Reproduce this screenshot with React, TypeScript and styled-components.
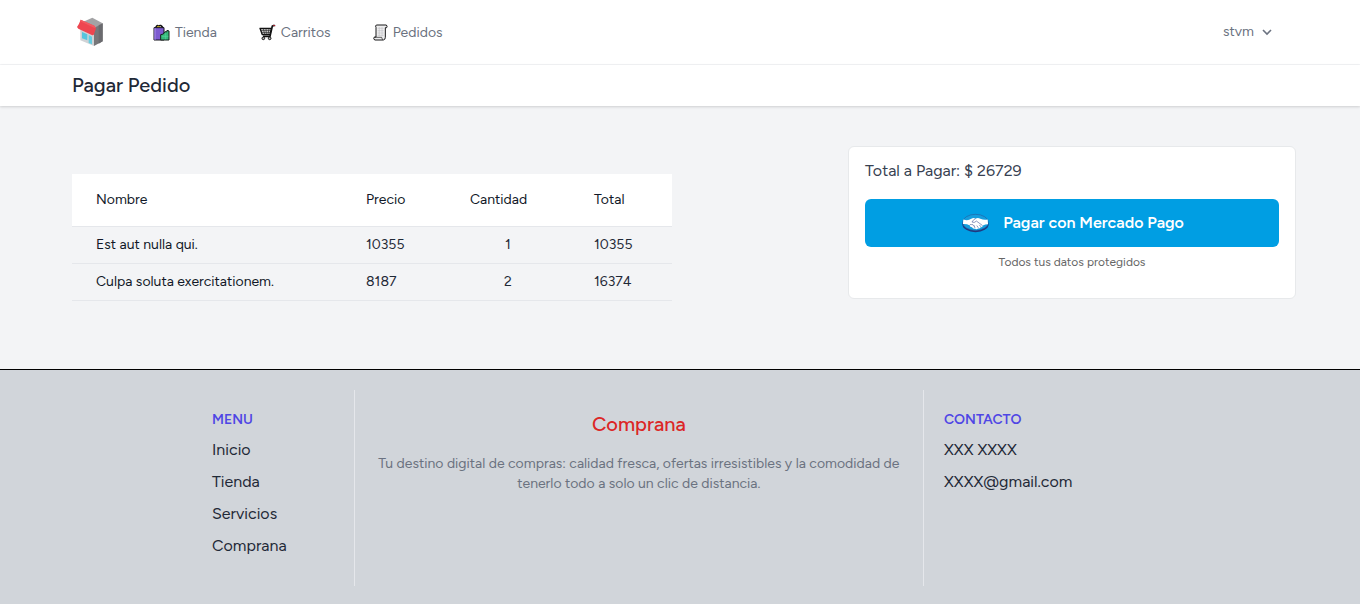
import React from 'react';
import styled, { createGlobalStyle } from 'styled-components';

const GlobalStyle = createGlobalStyle`
  *, *::before, *::after { box-sizing: border-box; }
  body {
    margin: 0;
    font-family: Figtree, Roboto, sans-serif;
    font-size: 14px;
    line-height: 20px;
    color: #111827;
    background: #f3f4f6;
  }
  h1, h2, h3, p, ul { margin: 0; padding: 0; }
  ul { list-style: none; }
  a { color: inherit; text-decoration: none; }
  button { font: inherit; cursor: pointer; }
  svg { display: block; flex: none; }
`;

const Page = styled.div`
  display: flex;
  flex-direction: column;
  min-height: 100vh;
`;

const NavBar = styled.nav`
  background: #fff;
  border-bottom: 1px solid #f3f4f6;
`;

const Container = styled.div`
  max-width: 1280px;
  margin: 0 auto;
  padding: 0 32px;
`;

const NavInner = styled(Container)`
  display: flex;
  align-items: center;
  height: 64px;
`;

const LogoLink = styled.a`
  margin: 0 49px 0 4px;
`;

const NavLinks = styled.ul`
  display: flex;
  gap: 42px;
  flex: 1;
  padding-top: 2px;
`;

const NavLink = styled.a`
  display: flex;
  align-items: center;
  gap: 5px;
  color: #6b7280;
`;

const UserButton = styled.button`
  display: flex;
  align-items: center;
  gap: 7px;
  margin-right: 15px;
  padding: 0;
  border: 0;
  background: none;
  color: #6b7280;
`;

const PageHeader = styled.header`
  background: #fff;
  box-shadow: 0 1px 3px rgba(0, 0, 0, 0.1), 0 1px 2px rgba(0, 0, 0, 0.06);
`;

const PageTitle = styled.h1`
  padding: 8px 0;
  font-size: 20px;
  font-weight: 500;
  line-height: 25px;
  color: #1f2937;
`;

const Content = styled.main`
  display: flex;
  justify-content: space-between;
  align-items: flex-start;
  gap: 32px;
  width: 100%;
  max-width: 1280px;
  margin: 0 auto;
  padding: 40px 24px 40px 32px;
`;

const OrderTable = styled.table`
  flex: 0 1 600px;
  width: 600px;
  margin: 28px 0;
  border-collapse: separate;
  border-spacing: 0;
  table-layout: fixed;
`;

const Col = styled.col<{ $width?: number }>`
  width: ${({ $width }) => ($width ? `${$width}px` : 'auto')};
`;

const HeadCell = styled.th`
  padding: 16px 24px;
  background: #fff;
  border-bottom: 1px solid #e5e7eb;
  font-weight: 400;
  text-align: left;
`;

const Cell = styled.td<{ $center?: boolean; $strong?: boolean }>`
  padding: 8px 24px;
  border-bottom: 1px solid #e5e7eb;
  text-align: ${({ $center }) => ($center ? 'center' : 'left')};
  color: ${({ $strong }) => ($strong ? '#111827' : '#1f2937')};
`;

const PayCard = styled.section`
  flex: 0 1 448px;
  padding: 12px 16px 28px;
  background: #fff;
  border: 1px solid #e7e9eb;
  border-radius: 6px;
`;

const PayTotal = styled.p`
  margin-bottom: 16px;
  font-size: 16px;
  line-height: 24px;
  color: #374151;
`;

const PayButton = styled.button`
  display: flex;
  align-items: center;
  justify-content: center;
  gap: 14px;
  width: 100%;
  height: 48px;
  padding: 0 0 0 2px;
  border: 0;
  border-radius: 6px;
  background: #009ee3;
  color: #fff;
  font-size: 16px;
  font-weight: 600;
`;

const PayNote = styled.p`
  margin-top: 8px;
  font-size: 12px;
  line-height: 15px;
  text-align: center;
  color: #666;
`;

const Footer = styled.footer`
  flex: 1;
  padding: 20px 24px;
  background: #d1d5da;
  border-top: 1px solid #000;
`;

const FooterGrid = styled.div`
  display: grid;
  grid-template-columns: 2fr 7fr 3fr;
  max-width: 976px;
  margin: 0 auto;
`;

const FooterColumn = styled.section<{ $divided?: boolean }>`
  min-height: 196px;
  padding: 20px;
  border-right: ${({ $divided }) => ($divided ? '1px solid #e5e7eb' : '0')};
`;

const FooterHeading = styled.h3`
  margin-bottom: 8px;
  font-size: 14px;
  font-weight: 600;
  line-height: 20px;
  color: #4f46e5;
`;

const FooterList = styled.ul`
  display: flex;
  flex-direction: column;
  gap: 8px;
  font-size: 16px;
  line-height: 24px;
  color: #1f2937;
`;

const Brand = styled.h2`
  margin-bottom: 16px;
  font-size: 20px;
  font-weight: 500;
  line-height: 28px;
  text-align: center;
  color: #dc2626;
`;

const Tagline = styled.p`
  text-align: center;
  color: #6b7280;
`;

const StoreLogo = () => (
  <svg width="28" height="32" viewBox="48 48 84 96" aria-hidden="true">
    <path d="M70 65 97 53l31 17-26 16z" fill="#a3a3a5" />
    <path d="M102 84l26-14v54l-26 14z" fill="#77777a" />
    <path d="M116 76l12-6v54l-12 7z" fill="#6b6b6f" />
    <path d="M61 84l41 18v36l-41-17z" fill="#d0d3d6" />
    <path d="M66 96l16 7v18l-16-6z" fill="#56c5dd" />
    <path d="M86 105l10 5v23l-10-4z" fill="#65cee2" />
    <path d="M62 59q-4 12-11 22l4 5 42 20 4-1q5-13 7-20l-5-8z" fill="#ee4650" />
    <path d="M62 59l41 18 4 7-5-1-41-19z" fill="#f25b61" />
  </svg>
);

const BagsIcon = () => (
  <svg width="17" height="18" viewBox="0 0 51 54" aria-hidden="true">
    <path d="M8 12Q12 1 17 7q6-7 13 5" fill="none" stroke="#111" strokeWidth="5" />
    <path d="M12 11q5-7 9 0" fill="none" stroke="#b79f22" strokeWidth="4" />
    <path d="M3 11h30v37H3z" fill="#7d5bd0" stroke="#17151d" strokeWidth="3" />
    <path d="M4 13h4v34H4z" fill="#9d83e4" />
    <path d="M23 32l8-2 5-7 5 1 1-5 6 2v27H23z" fill="#36b97c" stroke="#16221d" strokeWidth="3" strokeLinejoin="round" />
    <path d="M26 37h20M38 28v18" stroke="#55d49a" strokeWidth="2" />
  </svg>
);

const CartIcon = () => (
  <svg width="17" height="18" viewBox="0 0 51 54" aria-hidden="true">
    <path d="M47 4l-7 2-7 31H12" fill="none" stroke="#111" strokeWidth="5" strokeLinejoin="round" />
    <path d="M3 13h34l-4 19H10z" fill="#c9c9c9" stroke="#111" strokeWidth="4" strokeLinejoin="round" />
    <path d="M5 19h31M7 26h27M13 14l4 17M21 14l1 17M30 14l-3 17" stroke="#222" strokeWidth="2" />
    <path d="M43 4l5 1" stroke="#a52432" strokeWidth="3" strokeLinecap="round" />
    <circle cx="13" cy="43" r="4" fill="#bbb" stroke="#111" strokeWidth="3" />
    <circle cx="32" cy="43" r="4" fill="#bbb" stroke="#111" strokeWidth="3" />
  </svg>
);

const ReceiptIcon = () => (
  <svg width="15" height="18" viewBox="0 0 45 54" aria-hidden="true">
    <path d="M10 3h30q4 4 1 8h-4v29q0 7-6 8H5q-5-4-1-9h5V10q-3-4 1-7z" fill="#eeeeef" stroke="#18181a" strokeWidth="3" strokeLinejoin="round" />
    <path d="M5 40h21q0 5 4 7" fill="none" stroke="#18181a" strokeWidth="2" />
    <path d="M14 13h18M14 20h18M14 27h18M14 34h18M19 9v28M27 9v28" stroke="#c4c4c9" strokeWidth="2" />
  </svg>
);

const ChevronDown = () => (
  <svg width="12" height="12" viewBox="0 0 12 12" fill="none" aria-hidden="true">
    <path d="M2 4l4 4 4-4" stroke="currentColor" strokeWidth="1.6" />
  </svg>
);

const HandshakeLogo = () => (
  <svg width="27" height="20" viewBox="0 0 84 60" aria-hidden="true">
    <ellipse cx="42" cy="33" rx="41" ry="26" fill="#20387f" />
    <ellipse cx="42" cy="28" rx="40" ry="25" fill="#159ddd" stroke="#2360a3" strokeWidth="2" />
    <path d="M4 19q14 5 25-2 6-4 14-1 7-3 14 1 12 5 23 2l1 15q-9 0-16 4-1 6-7 5-2 5-8 4-4 4-10 1-6 0-9-5-6 0-8-6-8-5-20-4z" fill="#fff" />
    <path d="M43 16q-7 2-12 11 7 4 14-3l19 14M54 36l5 6M46 38l5 7M38 41l3 5M23 38q2-5 7-3 4-2 5 3 5-1 4 4" fill="none" stroke="#51609b" strokeWidth="2" />
  </svg>
);

const navItems = [
  { label: 'Tienda', Icon: BagsIcon },
  { label: 'Carritos', Icon: CartIcon },
  { label: 'Pedidos', Icon: ReceiptIcon },
];

const orderLines = [
  { name: 'Est aut nulla qui.', price: 10355, quantity: 1 },
  { name: 'Culpa soluta exercitationem.', price: 8187, quantity: 2 },
];

const menuItems = ['Inicio', 'Tienda', 'Servicios', 'Comprana'];

export default function App() {
  const total = orderLines.reduce((sum, line) => sum + line.price * line.quantity, 0);

  return (
    <Page>
      <GlobalStyle />
      <NavBar>
        <NavInner>
          <LogoLink href="#" aria-label="Comprana">
            <StoreLogo />
          </LogoLink>
          <NavLinks>
            {navItems.map(({ label, Icon }) => (
              <li key={label}>
                <NavLink href="#">
                  <Icon />
                  {label}
                </NavLink>
              </li>
            ))}
          </NavLinks>
          <UserButton type="button">
            stvm
            <ChevronDown />
          </UserButton>
        </NavInner>
      </NavBar>

      <PageHeader>
        <Container>
          <PageTitle>Pagar Pedido</PageTitle>
        </Container>
      </PageHeader>

      <Content>
        <OrderTable>
          <colgroup>
            <Col />
            <Col $width={104} />
            <Col $width={124} />
            <Col $width={102} />
          </colgroup>
          <thead>
            <tr>
              <HeadCell scope="col">Nombre</HeadCell>
              <HeadCell scope="col">Precio</HeadCell>
              <HeadCell scope="col">Cantidad</HeadCell>
              <HeadCell scope="col">Total</HeadCell>
            </tr>
          </thead>
          <tbody>
            {orderLines.map(({ name, price, quantity }) => (
              <tr key={name}>
                <Cell $strong>{name}</Cell>
                <Cell>{price}</Cell>
                <Cell $center>{quantity}</Cell>
                <Cell>{price * quantity}</Cell>
              </tr>
            ))}
          </tbody>
        </OrderTable>

        <PayCard>
          <PayTotal>Total a Pagar: $ {total}</PayTotal>
          <PayButton type="button">
            <HandshakeLogo />
            Pagar con Mercado Pago
          </PayButton>
          <PayNote>Todos tus datos protegidos</PayNote>
        </PayCard>
      </Content>

      <Footer>
        <FooterGrid>
          <FooterColumn $divided>
            <FooterHeading>MENU</FooterHeading>
            <FooterList>
              {menuItems.map((item) => (
                <li key={item}>
                  <a href="#">{item}</a>
                </li>
              ))}
            </FooterList>
          </FooterColumn>
          <FooterColumn $divided>
            <Brand>Comprana</Brand>
            <Tagline>
              Tu destino digital de compras: calidad fresca, ofertas irresistibles y la comodidad de
              tenerlo todo a solo un clic de distancia.
            </Tagline>
          </FooterColumn>
          <FooterColumn>
            <FooterHeading>CONTACTO</FooterHeading>
            <FooterList>
              <li>XXX XXXX</li>
              <li>
                <a href="#">XXXX@gmail.com</a>
              </li>
            </FooterList>
          </FooterColumn>
        </FooterGrid>
      </Footer>
    </Page>
  );
}
